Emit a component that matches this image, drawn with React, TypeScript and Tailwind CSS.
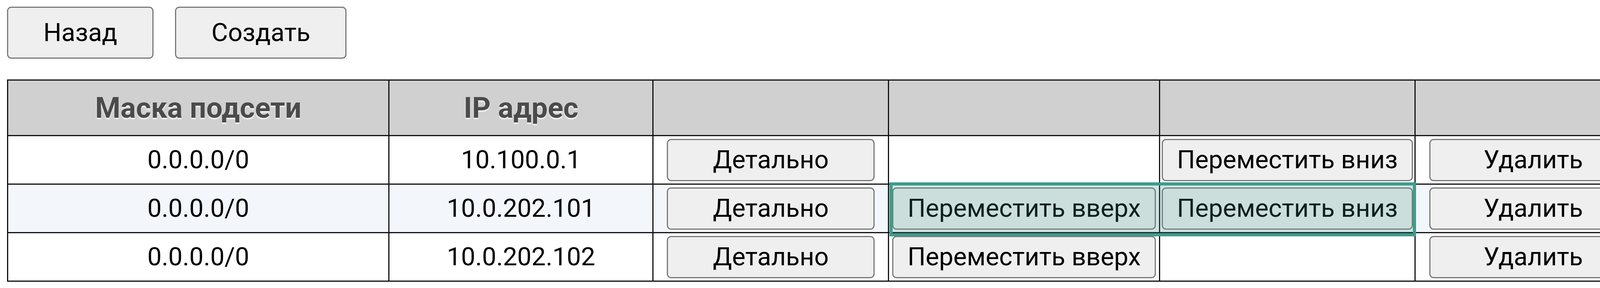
const ROWS = [
  { mask: "0.0.0.0/0", ip: "10.100.0.1", up: false, down: true, active: false },
  { mask: "0.0.0.0/0", ip: "10.0.202.101", up: true, down: true, active: true },
  { mask: "0.0.0.0/0", ip: "10.0.202.102", up: true, down: false, active: false },
];

function Btn({ children, wide }: { children: React.ReactNode; wide?: boolean }) {
  return (
    <button
      className={
        wide
          ? "h-[133px] px-[90px] bg-[#efefef] border-[3px] border-[#7a7a7a] rounded-[11px] text-[65px] text-black leading-none"
          : "h-[108px] min-w-[532px] px-[36px] bg-[#efefef] border-[3px] border-[#7a7a7a] rounded-[11px] text-[65px] text-black leading-none whitespace-nowrap"
      }
    >
      {children}
    </button>
  );
}

const cell = "border-[3px] border-[#111] text-center p-0";
const head = "border-[3px] border-[#111] text-[74px] font-bold text-[#4b4b4b] [text-shadow:0_3px_3px_#ffffff] p-0";

export default function App() {
  return (
    <div className="pt-[17px] pl-[18px] bg-white text-black font-['Roboto',sans-serif] w-[4246px] h-[736px] overflow-hidden">
      <div className="flex gap-[55px]">
        <Btn wide>Назад</Btn>
        <Btn wide>Создать</Btn>
      </div>
      <div className="relative mt-[53px] w-[4211px]">
        <table className="w-[4211px] border-collapse border-[3px] border-[#111]">
          <thead>
            <tr className="h-[142px] bg-[#d0d0d0]">
              <th className={`${head} w-[978px]`}>Маска подсети</th>
              <th className={`${head} w-[677px]`}>IP адрес</th>
              <th className={`${head} w-[603px]`} />
              <th className={`${head} w-[694px]`} />
              <th className={`${head} w-[654px]`} />
              <th className={`${head} w-[605px]`} />
            </tr>
          </thead>
          <tbody>
            {ROWS.map((r, i) => (
              <tr key={i} className={r.active ? "h-[124px] bg-[#f3f6fb]" : "h-[124px] bg-white"}>
                <td className={`${cell} text-[65px]`}>{r.mask}</td>
                <td className={`${cell} text-[65px]`}>{r.ip}</td>
                <td className={cell}>
                  <Btn>Детально</Btn>
                </td>
                <td className={cell}>{r.up && <Btn>Переместить вверх</Btn>}</td>
                <td className={cell}>{r.down && <Btn>Переместить вниз</Btn>}</td>
                <td className={cell}>
                  <Btn>Удалить</Btn>
                </td>
              </tr>
            ))}
          </tbody>
        </table>
        <div className="absolute left-[2259px] top-[263px] w-[1348px] h-[138px] border-[8px] border-[#3f9b8a] bg-[#3f9b8a]/20 pointer-events-none" />
      </div>
    </div>
  );
}
